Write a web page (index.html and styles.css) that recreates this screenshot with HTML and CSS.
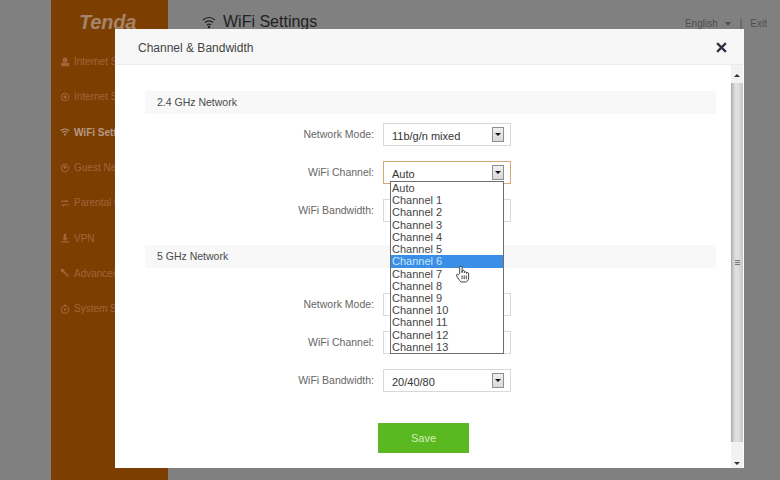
FILE: index.html
```html
<!DOCTYPE html>
<html lang="en">
<head>
<meta charset="utf-8">
<title>WiFi Settings</title>
<link rel="stylesheet" href="styles.css">
</head>
<body>
<div class="page">
  <aside class="sidebar">
    <div class="logo">Tenda</div>
    <nav class="nav">
      <div class="nav-item"><svg class="nav-icon" viewBox="0 0 12 12"><circle cx="6" cy="3.5" r="3"/><rect x="1" y="7" width="10" height="4" rx="1"/></svg>Internet Status</div>
      <div class="nav-item"><svg class="nav-icon" viewBox="0 0 12 12"><circle class="ring" cx="6" cy="6" r="4.5"/><circle cx="6" cy="6" r="2"/></svg>Internet Settings</div>
      <div class="nav-item active"><svg class="nav-icon" viewBox="0 0 12 12"><path class="ring" d="M1 4.5a7 7 0 0 1 10 0M3 6.7a4.2 4.2 0 0 1 6 0"/><circle cx="6" cy="9" r="1.2"/></svg>WiFi Settings</div>
      <div class="nav-item"><svg class="nav-icon" viewBox="0 0 12 12"><circle class="ring" cx="6" cy="6" r="4.5"/><circle cx="6" cy="5" r="2"/></svg>Guest Network</div>
      <div class="nav-item"><svg class="nav-icon" viewBox="0 0 12 12"><path class="ring" d="M1 4h8l-2-2M11 8H3l2 2"/></svg>Parental Control</div>
      <div class="nav-item"><svg class="nav-icon" viewBox="0 0 12 12"><path d="M4.500 1h3v5h2L6 9.500 2.500 6h2zM1 10h10v1.500H1z"/></svg>VPN</div>
      <div class="nav-item"><svg class="nav-icon" viewBox="0 0 12 12"><path class="ring thick" d="M2.500 2.500 10 10"/><circle cx="3" cy="3" r="2.200"/></svg>Advanced</div>
      <div class="nav-item"><svg class="nav-icon" viewBox="0 0 12 12"><circle class="ring" cx="6" cy="6.500" r="4.500"/><circle cx="6" cy="6.500" r="1.500"/><rect x="5" y="0.500" width="2" height="2"/></svg>System Settings</div>
    </nav>
  </aside>
  <main class="main">
    <header class="topbar">
      <h1 class="page-title"><svg class="title-icon" viewBox="0 0 14 14"><path class="title-arc" d="M1 5a8.500 8.500 0 0 1 12 0M3 7.500a5.600 5.600 0 0 1 8 0M5 10a2.800 2.800 0 0 1 4 0"/><circle class="title-dot" cx="7" cy="12" r="1.200"/></svg>WiFi Settings</h1>
      <div class="top-links"><span>English</span><span class="caret"></span><span class="sep">|</span><span>Exit</span></div>
    </header>
  </main>
</div>

<section class="dialog">
  <header class="dialog-head">
    <h2 class="dialog-title">Channel &amp; Bandwidth</h2>
    <svg class="close" viewBox="0 0 10 10"><path d="M1 1l8 8M9 1l-8 8"/></svg>
  </header>
  <div class="dialog-scroll">
    <div class="dialog-body">
      <div class="group-title">2.4 GHz Network</div>
      <div class="rows">
        <div class="row"><span class="label">Network Mode:</span><div class="select"><span class="value">11b/g/n mixed</span><span class="arrow"></span></div></div>
        <div class="row"><span class="label">WiFi Channel:</span><div class="select focus"><span class="value">Auto</span><span class="arrow"></span></div></div>
        <div class="row"><span class="label">WiFi Bandwidth:</span><div class="select"></div></div>
      </div>
      <div class="group-title second">5 GHz Network</div>
      <div class="rows lower">
        <div class="row"><span class="label">Network Mode:</span><div class="select"></div></div>
        <div class="row"><span class="label">WiFi Channel:</span><div class="select"></div></div>
        <div class="row"><span class="label">WiFi Bandwidth:</span><div class="select"><span class="value">20/40/80</span><span class="arrow"></span></div></div>
      </div>
      <div class="actions"><button class="save" type="button">Save</button></div>
    </div>
    <div class="scrollbar">
      <div class="sb-btn"><span class="sb-up"></span></div>
      <div class="sb-thumb"><span class="grip"></span></div>
      <div class="sb-btn bottom"><span class="sb-down"></span></div>
    </div>
  </div>
</section>

<ul class="dropdown">
  <li>Auto</li>
  <li>Channel 1</li>
  <li>Channel 2</li>
  <li>Channel 3</li>
  <li>Channel 4</li>
  <li>Channel 5</li>
  <li class="hover">Channel 6</li>
  <li>Channel 7</li>
  <li>Channel 8</li>
  <li>Channel 9</li>
  <li>Channel 10</li>
  <li>Channel 11</li>
  <li>Channel 12</li>
  <li>Channel 13</li>
</ul>

<svg class="cursor" viewBox="0 0 16 20"><path d="M5 9V2.500a1.300 1.300 0 0 1 2.600 0V8l0-1.300a1.200 1.200 0 0 1 2.400 0V8a1.200 1.200 0 0 1 2.300 0v1a1.100 1.100 0 0 1 2.200 0v4.500c0 2.500-1.500 4.500-3.500 4.500H7.500c-1.500 0-2.300-1-3-2.200L1.700 11.500c-.8-1.500 1-2.500 2-1.300z"/><path d="M7.500 11v4M9.800 11v4M12 11v4"/></svg>
</body>
</html>
```
FILE: styles.css
```css
* { box-sizing: border-box; }
html, body { margin: 0; padding: 0; height: 100%; }
body {
  width: 780px;
  height: 480px;
  overflow: hidden;
  position: relative;
  background: #808080;
  font-family: "Liberation Sans", Arial, sans-serif;
}
.page {
  display: flex;
  height: 480px;
  padding-left: 51px;
}
.sidebar {
  width: 117px;
  background: #7d3e02;
  flex: none;
}
.logo {
  height: 44px;
  padding: 11px 0 0 28px;
  font-size: 20px;
  line-height: 22px;
  font-weight: bold;
  font-style: italic;
  letter-spacing: -0.2px;
  color: #a4846a;
}
.nav-item {
  display: flex;
  align-items: center;
  height: 35.300px;
  padding-left: 9px;
  font-size: 10px;
  color: #a0663a;
  white-space: nowrap;
  overflow: hidden;
}
.nav-item.active {
  color: #b59a84;
  font-weight: bold;
}
.nav-icon {
  width: 10px;
  height: 10px;
  margin-right: 4px;
  flex: none;
  fill: #a0663a;
}
.active .nav-icon { fill: #b59a84; }
.ring {
  fill: none;
  stroke: #a0663a;
  stroke-width: 1.300;
}
.active .ring { stroke: #b59a84; }
.thick { stroke-width: 2; }
.main { flex: 1; }
.topbar {
  display: flex;
  justify-content: space-between;
  padding: 12px 13px 0 34px;
}
.page-title {
  display: flex;
  align-items: center;
  margin: 0;
  height: 20px;
  font-size: 16px;
  font-weight: normal;
  color: #222;
}
.title-icon {
  width: 14px;
  height: 14px;
  margin-right: 7px;
}
.title-arc { fill: none; stroke: #222; stroke-width: 1.200; }
.title-dot { fill: #222; }
.top-links {
  display: flex;
  align-items: center;
  height: 23px;
  font-size: 10px;
  color: #4f4f4f;
}
.caret {
  width: 0;
  height: 0;
  margin: 0 6px 0 7px;
  border-style: solid;
  border-width: 4px 3.500px 0;
  border-color: #4f4f4f transparent transparent;
}
.sep { margin: 0 8px 0 3px; }

.dialog {
  position: absolute;
  left: 115px;
  top: 29px;
  width: 629px;
  height: 439px;
  background: #fff;
  display: flex;
  flex-direction: column;
}
.dialog-head {
  flex: none;
  height: 36px;
  background: #f7f7f7;
  border-bottom: 1px solid #ececec;
  display: flex;
  align-items: center;
  justify-content: space-between;
  padding: 2px 17px 0 23px;
}
.dialog-title {
  margin: 0;
  font-size: 12px;
  font-weight: normal;
  color: #444;
}
.close {
  width: 11px;
  height: 11px;
  stroke: #2b3240;
  stroke-width: 2;
  fill: none;
}
.dialog-scroll {
  flex: 1;
  display: flex;
  min-height: 0;
}
.dialog-body {
  flex: 1;
  padding: 26px 15px 0 30px;
}
.group-title {
  height: 23px;
  line-height: 23px;
  background: #f8f8f8;
  padding-left: 12px;
  font-size: 10.500px;
  color: #4a4a4a;
}
.group-title.second { margin-top: 23px; }
.rows {
  display: flex;
  flex-direction: column;
  gap: 15px;
  margin-top: 9px;
}
.rows.lower { margin-top: 25px; }
.row {
  display: flex;
  align-items: center;
  height: 23px;
}
.label {
  width: 229px;
  text-align: right;
  font-size: 10.500px;
  color: #666;
  position: relative;
  top: -1px;
}
.select {
  position: relative;
  margin-left: 9px;
  width: 128px;
  height: 23px;
  border: 1px solid #d9d9d9;
  background: #fff;
  display: flex;
  align-items: center;
  justify-content: space-between;
  padding: 2px 6px 0 8px;
}
.select.focus { border-color: #d6a878; }
.value {
  font-size: 11px;
  color: #333;
}
.arrow {
  position: relative;
  width: 12px;
  height: 15px;
  top: -1px;
  background: linear-gradient(#f0f0f0, #d8d8d8);
  border: 1px solid #8f8f8f;
}
.arrow::after {
  content: "";
  position: absolute;
  left: 2px;
  top: 5px;
  border-style: solid;
  border-width: 3px 3px 0;
  border-color: #111 transparent transparent;
}
.actions {
  display: flex;
  margin-top: 31px;
  padding-left: 233px;
}
.save {
  width: 91px;
  height: 30px;
  border: 1px solid #62b32e;
  background: #5ab820;
  color: #d4eebd;
  font-family: inherit;
  font-size: 11px;
  padding: 0;
}
.scrollbar {
  flex: none;
  width: 12px;
  margin-right: 1px;
  display: flex;
  flex-direction: column;
  background: #f2f2f2;
}
.sb-btn {
  height: 15px;
  flex: none;
  display: flex;
  align-items: center;
  justify-content: center;
  background: #f2f2f2;
  margin-top: 3px;
}
.sb-btn.bottom { margin-top: 0; height: 26px; align-items: flex-end; padding-bottom: 3px; }
.sb-up, .sb-down {
  width: 0;
  height: 0;
  border-style: solid;
  border-color: transparent;
}
.sb-up { border-width: 0 3px 3px; border-bottom-color: #333; }
.sb-down { border-width: 3px 3px 0; border-top-color: #333; }
.sb-thumb {
  flex: 1;
  display: flex;
  align-items: center;
  justify-content: center;
  background: linear-gradient(90deg, #bdbdbd, #e2e2e2 35%, #d8d8d8 70%, #c4c4c4);
  border-left: 1px solid #adadad;
}
.grip {
  width: 5px;
  height: 6px;
  background: repeating-linear-gradient(#777 0 1px, #d8d8d8 1px 2px);
}

.dropdown {
  position: absolute;
  left: 390px;
  top: 181px;
  width: 114px;
  height: 173px;
  margin: 0;
  padding: 0;
  list-style: none;
  background: #fff;
  border: 1px solid #6e6e6e;
  font-size: 11px;
  color: #444;
}
.dropdown li {
  height: 12.230px;
  line-height: 12px;
  padding-left: 1px;
}
.dropdown .hover {
  background: #3a8ee6;
  color: #c8e4fb;
}
.cursor {
  position: absolute;
  left: 455px;
  top: 265px;
  width: 15px;
  height: 19px;
  fill: #fff;
  stroke: #333;
  stroke-width: 1;
}
```
